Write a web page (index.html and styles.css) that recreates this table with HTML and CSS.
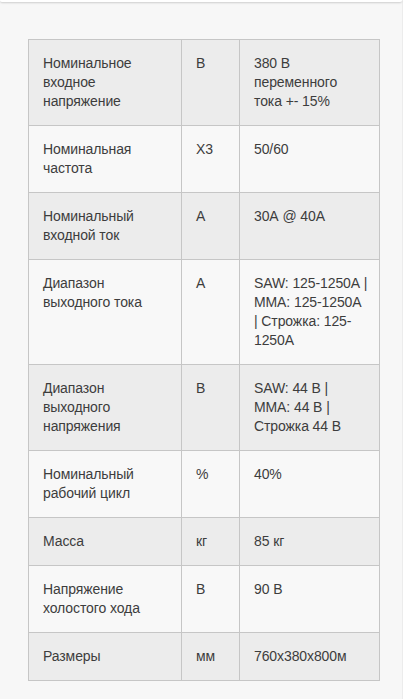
FILE: index.html
```html
<!DOCTYPE html>
<html lang="ru">
<head>
<meta charset="utf-8">
<title>Характеристики</title>
<link rel="stylesheet" href="styles.css">
</head>
<body>
<div class="page">
  <div class="card-edge"></div>
  <div class="content">
    <table class="spec">
      <colgroup>
        <col class="c-name">
        <col class="c-unit">
        <col class="c-val">
      </colgroup>
      <tbody>
        <tr class="alt"><td>Номинальное входное напряжение</td><td>В</td><td class="val">380 В<br>переменного<br>тока +- 15%</td></tr>
        <tr><td>Номинальная частота</td><td>Х3</td><td class="val">50/60</td></tr>
        <tr class="alt"><td>Номинальный входной ток</td><td>А</td><td class="val">30А @ 40А</td></tr>
        <tr><td>Диапазон выходного тока</td><td>А</td><td class="val">SAW: 125-1250А |<br>ММА: 125-1250А<br>| Строжка: 125-<br>1250А</td></tr>
        <tr class="alt"><td>Диапазон выходного напряжения</td><td>В</td><td class="val">SAW: 44 В |<br>ММА: 44 В |<br>Строжка 44 В</td></tr>
        <tr><td>Номинальный рабочий цикл</td><td>%</td><td class="val">40%</td></tr>
        <tr class="alt"><td>Масса</td><td>кг</td><td class="val">85 кг</td></tr>
        <tr><td>Напряжение холостого хода</td><td>В</td><td class="val">90 В</td></tr>
        <tr class="alt"><td>Размеры</td><td>мм</td><td class="val">760x380x800м</td></tr>
      </tbody>
    </table>
  </div>
</div>
</body>
</html>
```
FILE: styles.css
```css
html, body {
  margin: 0;
  padding: 0;
  background: #ffffff;
}
body {
  font-family: "Liberation Sans", Arial, sans-serif;
  color: #3d3d3d;
}
.page {
  width: 402px;
  min-height: 699px;
  background: #f7f7f7;
  border-right: 1px solid #ececec;
}
.card-edge {
  height: 2px;
  background: #ffffff;
  border-radius: 0 0 6px 6px;
  box-shadow: 0 1px 2px rgba(0, 0, 0, 0.18);
}
.content {
  padding: 37px 0 0 28px;
}
.spec {
  width: 351px;
  border-collapse: collapse;
  table-layout: fixed;
  font-size: 14px;
  line-height: 19px;
  letter-spacing: -0.1px;
}
.c-name { width: 153px; }
.c-unit { width: 58px; }
.c-val { width: 140px; }
.spec td {
  border: 1px solid #c6c6c6;
  padding: 14px;
  vertical-align: top;
  background: #f8f8f8;
}
.spec td.val {
  padding-right: 6px;
  white-space: nowrap;
}
.spec tr.alt td {
  background: #ececec;
}
```
